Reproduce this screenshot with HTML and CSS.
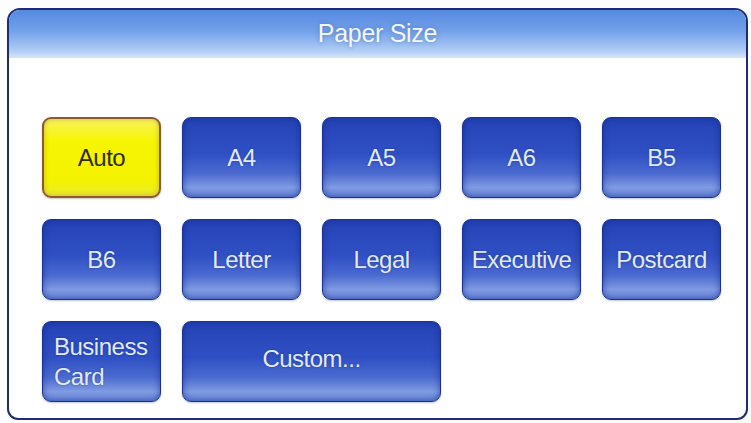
FILE: index.html
```html
<!DOCTYPE html>
<html lang="en">

<head>
  <meta charset="UTF-8">
  <title>Paper Size</title>
  <link rel="stylesheet" href="styles.css">
</head>

<body>

  <div class="panel">
    <div class="panel-header">Paper Size</div>

    <div class="size-grid">
      <button class="size-btn selected">Auto</button>
      <button class="size-btn">A4</button>
      <button class="size-btn">A5</button>
      <button class="size-btn">A6</button>
      <button class="size-btn">B5</button>

      <button class="size-btn">B6</button>
      <button class="size-btn">Letter</button>
      <button class="size-btn">Legal</button>
      <button class="size-btn">Executive</button>
      <button class="size-btn">Postcard</button>

      <button class="size-btn two-line">Business<br>Card</button>
      <button class="size-btn wide">Custom...</button>
    </div>
  </div>

</body>

</html>
```

FILE: styles.css
```css
body {
  margin: 0;
  background: #fdfdfd;
  font-family: "Liberation Sans", Arial, sans-serif;
}

.panel {
  margin: 8px 3px 0 7px;
  width: 737px;
  height: 408px;
  border: 2px solid #1f2c74;
  border-radius: 13px 13px 11px 11px;
  background: #ffffff;
  overflow: hidden;
}

.panel-header {
  height: 48px;
  background: linear-gradient(to bottom, #5589e0 0%, #74a2ea 45%, #b0cdf3 85%, #d6e6f8 100%);
  color: #f2f6fc;
  font-size: 25px;
  letter-spacing: -0.3px;
  text-align: center;
  line-height: 46px;
  text-shadow: 0 0 4px rgba(60, 100, 170, 0.6);
}

.size-grid {
  display: grid;
  grid-template-columns: repeat(5, 119px);
  grid-auto-rows: 81px;
  column-gap: 21px;
  row-gap: 21px;
  padding: 59px 0 0 33px;
}

.size-btn {
  font-family: "Liberation Sans", Arial, sans-serif;
  font-size: 24px;
  letter-spacing: -0.5px;
  color: #e2eaf8;
  border: 1px solid #1a3193;
  border-radius: 9px;
  background: linear-gradient(to bottom, #2543b6 0%, #2f50c4 45%, #4b6ad0 70%, #7f9be2 88%, #6b89da 100%);
  box-shadow: inset 0 0 7px rgba(20, 40, 140, 0.65), 0 1px 2px rgba(40, 60, 120, 0.3);
  padding: 0;
  text-shadow: 0 0 2px rgba(10, 30, 110, 0.5);
}

.size-btn.selected {
  color: #2e2e10;
  border: 2px solid #8a5a32;
  background: linear-gradient(to bottom, #f8f35a 0%, #f7f500 30%, #f5f200 80%, #eaea30 100%);
  box-shadow: inset 0 0 5px rgba(160, 120, 40, 0.5), 0 1px 2px rgba(90, 70, 30, 0.3);
  text-shadow: none;
}

.size-btn.two-line {
  text-align: left;
  padding-left: 11px;
  line-height: 30px;
}

.size-btn.wide {
  grid-column: span 2;
  padding-bottom: 6px;
}
```
